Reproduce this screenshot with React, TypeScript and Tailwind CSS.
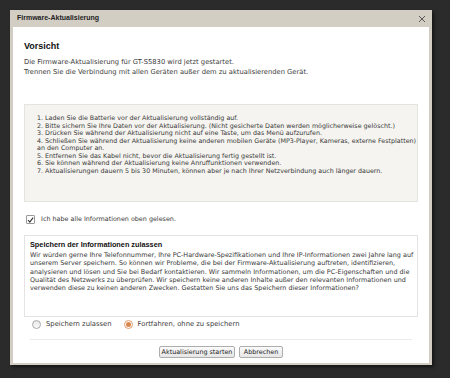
import React from "react";

const lib = { fontFamily: '"Liberation Sans", Arial, sans-serif' };
const dv = { fontFamily: '"DejaVu Sans", Verdana, sans-serif' };

export default function App() {
  const items = [
    "1. Laden Sie die Batterie vor der Aktualisierung vollständig auf.",
    "2. Bitte sichern Sie Ihre Daten vor der Aktualisierung. (Nicht gesicherte Daten werden möglicherweise gelöscht.)",
    "3. Drücken Sie während der Aktualisierung nicht auf eine Taste, um das Menü aufzurufen.",
    "4. Schließen Sie während der Aktualisierung keine anderen mobilen Geräte (MP3-Player, Kameras, externe Festplatten)",
    "an den Computer an.",
    "5. Entfernen Sie das Kabel nicht, bevor die Aktualisierung fertig gestellt ist.",
    "6. Sie können während der Aktualisierung keine Anruffunktionen verwenden.",
    "7. Aktualisierungen dauern 5 bis 30 Minuten, können aber je nach Ihrer Netzverbindung auch länger dauern.",
  ];
  const para = [
    "Wir würden gerne Ihre Telefonnummer, Ihre PC-Hardware-Spezifikationen und Ihre IP-Informationen zwei Jahre lang auf",
    "unserem Server speichern. So können wir Probleme, die bei der Firmware-Aktualisierung auftreten, identifizieren,",
    "analysieren und lösen und Sie bei Bedarf kontaktieren. Wir sammeln Informationen, um die PC-Eigenschaften und die",
    "Qualität des Netzwerks zu überprüfen. Wir speichern keine anderen Inhalte außer den relevanten Informationen und",
    "verwenden diese zu keinen anderen Zwecken. Gestatten Sie uns das Speichern dieser Informationen?",
  ];
  return (
    <div className="w-[450px] h-[378px] bg-[#2b2b2b] pt-[10px] pl-[10px] overflow-hidden" style={dv}>
      <div className="w-[422px] h-[355px] bg-[#d3cec4] flex flex-col px-[3px] pb-[2px] shadow-[2px_2px_3px_rgba(0,0,0,0.5)]">
        <div className="h-[17px] flex items-center justify-between pl-[4px] pr-[2px]">
          <span className="text-[7px] font-bold text-[#222]" style={lib}>Firmware-Aktualisierung</span>
          <svg width="8" height="8" viewBox="0 0 8 8" className="mr-[1px]">
            <path d="M1 1 L7 7 M7 1 L1 7" stroke="#555" strokeWidth="1" />
          </svg>
        </div>
        <div className="flex-1 bg-white flex flex-col px-[11px] pt-[14px] pb-[5px] text-[#3a3a3a] whitespace-nowrap">
          <div className="text-[9px] leading-[10px] font-bold text-[#111]" style={lib}>Vorsicht</div>
          <div className="mt-[6px] text-[6.75px] leading-[10px]">
            <div>Die Firmware-Aktualisierung für GT-S5830 wird jetzt gestartet.</div>
            <div>Trennen Sie die Verbindung mit allen Geräten außer dem zu aktualisierenden Gerät.</div>
          </div>
          <div className="mt-[27px] h-[98px] bg-[#f5f4f0] border border-[#e6e4de] pl-[12px] pr-[8px] pt-[9px] text-[6.35px] leading-[7.5px]">
            {items.map((t) => (
              <div key={t}>{t}</div>
            ))}
          </div>
          <div className="mt-[13px] flex items-center ml-[2px]">
            <div className="w-[9px] h-[9px] border border-[#9a9a9a] bg-white flex items-center justify-center rounded-[1px]">
              <svg width="8" height="8" viewBox="0 0 8 8">
                <path d="M1.2 4 L3.2 6.3 L7 1.2" stroke="#333" strokeWidth="1.3" fill="none" />
              </svg>
            </div>
            <span className="ml-[6px] text-[6.4px] leading-[9px]">Ich habe alle Informationen oben gelesen.</span>
          </div>
          <div className="mt-[11px] h-[82px] border border-[#e4e4e4] pl-[5px] pr-[6px] pt-[4px]">
            <div className="text-[7.3px] leading-[10px] font-bold text-[#111]" style={lib}>Speichern der Informationen zulassen</div>
            <div className="mt-[1px] text-[6.45px] leading-[8.33px]">
              {para.map((t) => (
                <div key={t}>{t}</div>
              ))}
            </div>
          </div>
          <div className="mt-[3px] flex items-center ml-[8px] h-[9px]">
            <div className="w-[9px] h-[9px] rounded-full border border-[#a8a8a8] bg-gradient-to-b from-[#e8e8e8] to-[#fafafa]" />
            <span className="ml-[5px] text-[6.8px]">Speichern zulassen</span>
            <div className="ml-[12px] w-[9px] h-[9px] rounded-full border border-[#e0a070] bg-white flex items-center justify-center">
              <div className="w-[5px] h-[5px] rounded-full bg-[#d9874a]" />
            </div>
            <span className="ml-[5px] text-[6.8px]">Fortfahren, ohne zu speichern</span>
          </div>
          <div className="mt-[10px] mx-[6px] h-px bg-[#ebebeb]" />
          <div className="mt-[6px] flex justify-center gap-[4px]">
            <button className="h-[12px] w-[76px] border border-[#adadad] rounded-[2px] bg-gradient-to-b from-[#fbfbfb] to-[#e6e6e6] text-[6.4px] text-[#222] leading-none">
              Aktualisierung starten
            </button>
            <button className="h-[12px] w-[44px] border border-[#adadad] rounded-[2px] bg-gradient-to-b from-[#fbfbfb] to-[#e6e6e6] text-[6.4px] text-[#222] leading-none">
              Abbrechen
            </button>
          </div>
        </div>
      </div>
    </div>
  );
}
